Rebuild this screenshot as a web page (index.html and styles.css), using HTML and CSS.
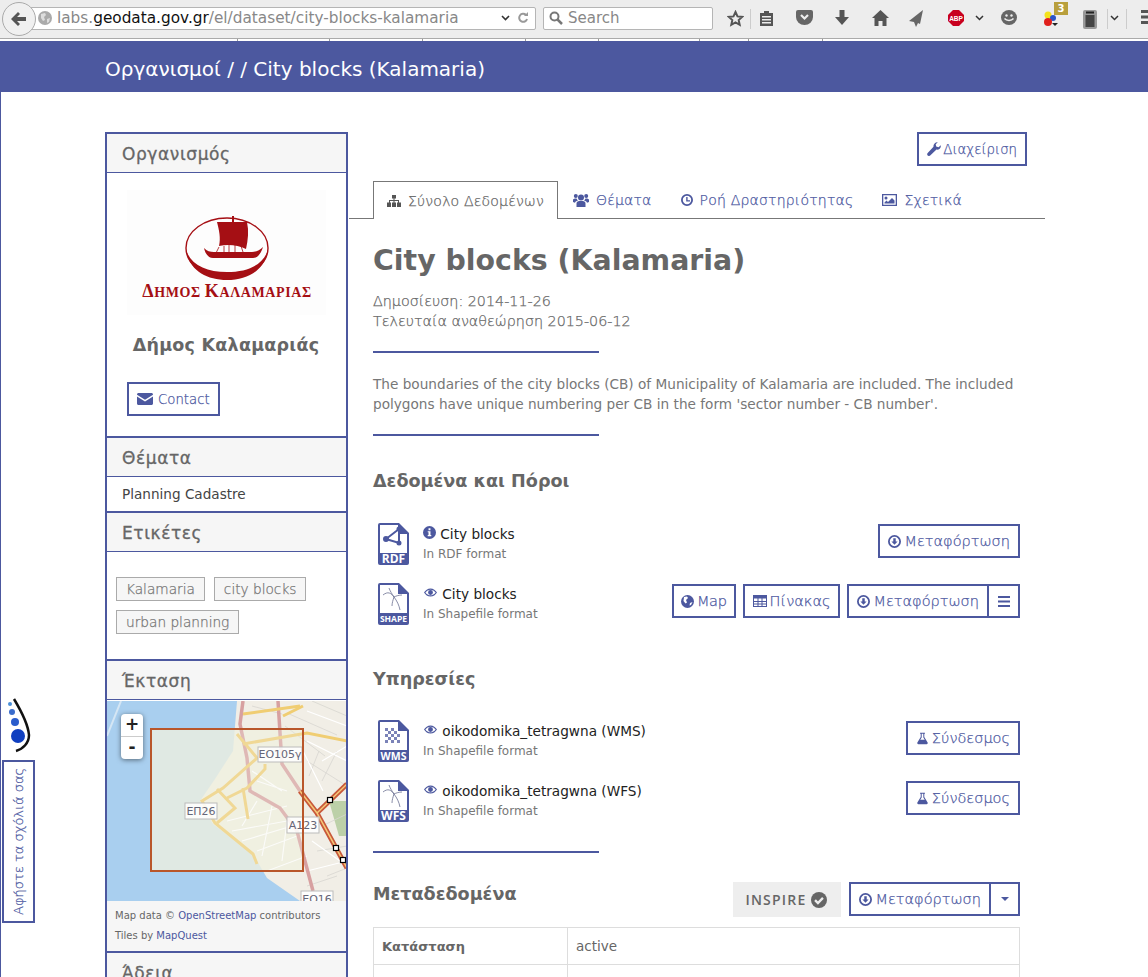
FILE: index.html
```html
<!DOCTYPE html>
<html>
<head>
    <meta charset="utf-8">
    <title>City blocks (Kalamaria)</title>
    <link rel="stylesheet" href="styles.css">
</head>
<body>
    <svg class="defs" width="0" height="0">
        <symbol id="i-down" viewBox="0 0 16 16"><path fill-rule="evenodd" d="M8 0a8 8 0 1 1 0 16A8 8 0 0 1 8 0zm0 2.200a5.800 5.800 0 1 0 0 11.600A5.800 5.800 0 0 0 8 2.200zM6.500 4h3v4h2.300L8 12 4.200 8h2.300z"/></symbol>
        <symbol id="i-eye" viewBox="0 0 16 16"><path fill-rule="evenodd" d="M8 3c3.500 0 6.200 2.200 8 5-1.800 2.800-4.500 5-8 5s-6.200-2.200-8-5c1.800-2.800 4.500-5 8-5zM8 4.500c-2.500 0-4.800 1.500-6.300 3.500C3.200 10 5.500 11.500 8 11.500s4.800-1.500 6.300-3.500C12.800 6 10.500 4.500 8 4.500zM8 5a3 3 0 1 1 0 6 3 3 0 0 1 0-6z"/></symbol>
        <symbol id="i-info" viewBox="0 0 16 16"><path fill-rule="evenodd" d="M8 0a8 8 0 1 1 0 16A8 8 0 0 1 8 0zM6.800 2.800v2.400h2.400V2.800zM5.800 6.400v1.300h1v3.500H5.800v1.300h4.400v-1.300h-1V6.400z"/></symbol>
        <symbol id="i-flask" viewBox="0 0 16 16"><path fill-rule="evenodd" d="M5 1h6v1.300h-.8v4L14.300 13c.5 1-.1 2-1.200 2H2.900c-1.100 0-1.700-1-1.200-2l4.100-6.700v-4H5zM7 2.300v4.400L5.200 9.500h5.600L9 6.700V2.300z"/></symbol>
    </svg>

    <div class="browser">
        <div class="back-btn">
            <svg width="16" height="14" viewBox="0 0 16 14"><path fill="#555" d="M7 0l2 2-3 3h9v4H6l3 3-2 2-7-7z"/></svg>
        </div>
        <div class="url-bar">
            <svg class="globe" width="14" height="14" viewBox="0 0 14 14"><circle cx="7" cy="7" r="7" fill="#aaa"/><path fill="#ddd" d="M3 3l4-1 1 2-2 2 1 3-2 1-2-3zM9 8l3-1-1 4-2 1z"/></svg>
            <span class="url-text">labs.<b>geodata.gov.gr</b>/el/dataset/city-blocks-kalamaria</span>
            <svg width="9" height="6" viewBox="0 0 9 6"><path fill="none" stroke="#333" stroke-width="1.600" d="M1 1l3.500 3.500L8 1"/></svg>
            <svg class="reload" width="12" height="12" viewBox="0 0 12 12"><path fill="none" stroke="#999" stroke-width="2" d="M10 7a4 4 0 1 1-1-4"/><path fill="#999" d="M7 4h4V0z"/></svg>
        </div>
        <div class="search-bar">
            <svg width="14" height="14" viewBox="0 0 14 14"><circle cx="5.500" cy="5.500" r="4" fill="none" stroke="#777" stroke-width="2"/><path stroke="#777" stroke-width="2.500" d="M8.500 8.500l4.500 4.500"/></svg>
            <span>Search</span>
        </div>
        <div class="tool-icons">
            <svg style="left:727px" class="tool" width="17" height="17" viewBox="0 0 17 17"><path fill="none" stroke="#555" stroke-width="2" d="M8.500 2l2 4.400 4.700.5-3.500 3.200 1 4.700-4.200-2.400-4.200 2.400 1-4.700L1.800 6.900l4.700-.5z"/></svg>
            <i class="divider" style="left:750px"></i>
            <svg style="left:759px" class="tool" width="15" height="17" viewBox="0 0 15 17"><path fill="#555" fill-rule="evenodd" d="M1 3h4V1h5v2h4v13H1zM3 6v1.500h9V6zm0 3v1.500h9V9zm0 3v1.500h9V12z"/></svg>
            <svg style="left:796px" class="tool" width="17" height="15" viewBox="0 0 17 15"><path fill="#666" d="M2 0h13a2 2 0 0 1 2 2v5a8.500 8 0 0 1-17 0V2a2 2 0 0 1 2-2z"/><path fill="none" stroke="#eee" stroke-width="2.200" d="M5 5l3.500 3.500L12 5"/></svg>
            <svg style="left:835px" class="tool" width="14" height="16" viewBox="0 0 14 16"><path fill="#555" d="M4.500 0h5v7H14l-7 8-7-8h4.500z"/></svg>
            <svg style="left:872px" class="tool" width="17" height="16" viewBox="0 0 17 16"><path fill="#555" d="M8.500 0L17 8h-2.500v8h-4v-5h-4v5h-4V8H0z"/></svg>
            <svg style="left:909px" class="tool" width="14" height="17" viewBox="0 0 14 17"><path fill="#666" d="M14 0L0 11l5 1 2 5 2-4 2 1z"/></svg>
            <svg style="left:948px" class="tool" width="16" height="16" viewBox="0 0 16 16"><path fill="#c8001e" d="M5 0h6l5 5v6l-5 5H5l-5-5V5z"/><text x="8" y="10.500" class="abp-text">ABP</text></svg>
            <svg style="left:975px" class="tool chevron" width="9" height="6" viewBox="0 0 9 6"><path fill="none" stroke="#333" stroke-width="1.500" d="M1 1l3.500 3.500L8 1"/></svg>
            <svg style="left:1001px" class="tool" width="16" height="16" viewBox="0 0 16 16"><ellipse cx="8" cy="7.500" rx="8" ry="7.500" fill="#666"/><circle cx="5.500" cy="5.500" r="1.200" fill="#eee"/><circle cx="10.500" cy="5.500" r="1.200" fill="#eee"/><path fill="none" stroke="#eee" stroke-width="1.500" d="M3.500 8.500c2 2.500 7 2.500 9 0"/></svg>
            <svg style="left:1043px" class="tool" width="16" height="17" viewBox="0 0 16 17"><circle cx="5" cy="5" r="3.500" fill="#f4e21c"/><circle cx="10" cy="8" r="3" fill="#2a55c8"/><circle cx="5" cy="12" r="4" fill="#e0201c"/><path fill="#222" d="M9 13h6l-3 3z"/></svg>
            <span class="tool badge">3</span>
            <svg style="left:1083px" class="tool" width="14" height="19" viewBox="0 0 14 19"><rect width="14" height="19" rx="2" fill="#999"/><rect x="2.500" y="5" width="9" height="12" fill="#444"/><rect x="3" y="1.500" width="8" height="2" fill="#222"/></svg>
            <i class="divider" style="left:1107px"></i>
            <svg style="left:1110px" class="tool chevron" width="9" height="6" viewBox="0 0 9 6"><path fill="none" stroke="#333" stroke-width="1.500" d="M1 1l3.500 3.500L8 1"/></svg>
            <i class="divider" style="left:1126px"></i>
            <svg style="left:1141px" class="tool" width="7" height="14" viewBox="0 0 7 14"><path fill="#555" d="M0 0h7v3H0zM0 5.500h7v3H0zM0 11h7v3H0z"/></svg>
        </div>
    </div>
    <div class="tick-strip">
        <i style="left:237px"></i><i style="left:329px"></i><i style="left:422px"></i><i style="left:525px"></i>
        <i style="left:598px"></i><i style="left:699px"></i><i style="left:748px"></i><i style="left:822px"></i>
    </div>

    <div class="site-head">Οργανισμοί / / City blocks (Kalamaria)</div>

    <div class="page">
        <aside class="sidebar">
            <section class="side-box">
                <h2 class="side-title">Οργανισμός</h2>
                <div class="org-body">
                    <div class="org-logo">
                        <svg width="200" height="125" viewBox="0 0 200 125">
                            <ellipse cx="100" cy="58" rx="41" ry="30" fill="none" stroke="#a50f14" stroke-width="1.400"/>
                            <path fill="#a50f14" d="M59 60c3 20 20 30 41 30s38-10 41-30c-5 15-20 22-41 22S64 75 59 60z"/>
                            <path fill="#a50f14" d="M90 32h30c2 9 1 18-1 27-8-4-18-5-27-3 2-8 0-16-2-24z"/>
                            <path fill="#a50f14" d="M105 26h2v6h-2z"/>
                            <path fill="#a50f14" d="M77 58c3 3 6 4 10 4h38c4 0 8-2 11-5-2 6-5 11-10 11H86c-5 0-8-5-9-10z"/>
                            <path stroke="#a50f14" stroke-width=".8" d="M92 57l-3 6M97 56v6M102 55v7M108 55v7M114 56l2 6"/>
                            <text x="100" y="107" class="logo-text"><tspan class="logo-cap">Δ</tspan>ΗΜΟΣ <tspan class="logo-cap">Κ</tspan>ΑΛΑΜΑΡΙΑΣ</text>
                        </svg>
                    </div>
                    <h3 class="org-name">Δήμος Καλαμαριάς</h3>
                    <a class="btn btn-contact">
                        <svg class="ico" width="16" height="12" viewBox="0 0 16 12"><path d="M1.500 0h13c.8 0 1.500.7 1.500 1.500v.3L8 6.800 0 1.800v-.3C0 .7.700 0 1.500 0zM0 3.500l8 5 8-5v7c0 .8-.7 1.500-1.500 1.500h-13C.7 12 0 11.300 0 10.500z"/></svg>
                        Contact
                    </a>
                </div>
            </section>
            <section class="side-box">
                <h2 class="side-title">Θέματα</h2>
                <div class="topic-body">Planning Cadastre</div>
            </section>
            <section class="side-box">
                <h2 class="side-title">Ετικέτες</h2>
                <div class="tags-body">
                    <a class="tag">Kalamaria</a>
                    <a class="tag">city blocks</a>
                    <a class="tag">urban planning</a>
                </div>
            </section>
            <section class="side-box">
                <h2 class="side-title">Έκταση</h2>
                <div class="map">
                    <svg width="240" height="200" viewBox="0 0 240 200">
                        <rect width="240" height="200" fill="#a9cfef"/>
                        <path fill="none" stroke="#d5e6f4" stroke-width="2" d="M0 35L14 0"/>
                        <path fill="#f1eee6" d="M130 0L126 50 108 78 93 100 106 123 146 153 160 177 193 200H240V0z"/>
                        <path fill="#bcd0a8" d="M222 100h18v35h-8z"/>
                        <rect x="44" y="28" width="152" height="142" fill="#eef0dc" fill-opacity=".7"/>
                        <g fill="none" stroke="#d8d6d0" stroke-width=".8">
                            <path d="M145 5l30 8M180 12l50 22M178 25l40 30M205 0l35 15M200 60l40 25M215 125l25-12M210 150l30-5M220 175l20-8M200 185l30-10M212 50l-10 25M230 50l-15 30"/>
                        </g>
                        <g fill="none" stroke="#fff" stroke-width="1.200">
                            <path d="M150 80l30 10M120 120l60-15M125 130l55-10M135 140l50-15M150 150l40-15M160 170l40-15M205 140l35 25M200 170l40-10M215 60l25-15M200 40l40 20M145 70l30 20M150 100l-15 25M165 105l-10 50M180 120l-5 40M200 10l40 15M196 50l20 40"/>
                        </g>
                        <g fill="none" stroke="#d7a0a0" stroke-width="3.500">
                            <path d="M136 0l-3 23 7 34 3 33 30 17 17 23 16 60"/>
                            <path d="M171 0l4 63 18 27"/>
                        </g>
                        <g fill="none" stroke="#f0cd72" stroke-width="3">
                            <path d="M130 33l20 24-34 30-21 13 13 22 38 31 4 10"/>
                            <path d="M110 88l18 19-18 15"/>
                            <path d="M120 97l20-10 18-19v-5"/>
                            <path d="M136 87l5 31"/>
                            <path d="M136 43l64-11 40 8"/>
                            <path d="M136 13l57-8"/>
                            <path d="M176 15l20-10"/>
                        </g>
                        <rect x="44" y="28" width="152" height="142" fill="#f2f2e8" fill-opacity=".3"/>
                        <g fill="none" stroke="#c8583a" stroke-width="5">
                            <path d="M193 90l17 22 30 55"/>
                            <path d="M210 112l30-29"/>
                        </g>
                        <g fill="none" stroke="#f5c878" stroke-width="1.500">
                            <path d="M193 90l17 22 30 55"/>
                            <path d="M210 112l30-29"/>
                        </g>
                        <g class="map-labels">
                            <rect x="151" y="46" width="44" height="15"/><text x="173" y="57">ΕΟ105γ</text>
                            <rect x="78" y="102" width="32" height="16"/><text x="94" y="114">ΕΠ26</text>
                            <rect x="180" y="116" width="32" height="16"/><text x="196" y="128">Α123</text>
                            <rect x="194" y="190" width="32" height="16"/><text x="210" y="202">ΕΟ16</text>
                        </g>
                        <g fill="#fff" stroke="#000" stroke-width="1.200">
                            <rect x="220.500" y="96.500" width="5" height="5"/>
                            <rect x="226.500" y="144.500" width="5" height="5"/>
                            <rect x="233.500" y="156.500" width="5" height="5"/>
                        </g>
                        <rect x="44" y="28" width="152" height="142" fill="none" stroke="#b9562a" stroke-width="2"/>
                    </svg>
                    <div class="zoom-ctl">
                        <span class="zoom-btn">+</span>
                        <span class="zoom-btn">-</span>
                    </div>
                </div>
                <div class="map-credit">
                    <p>Map data © <a>OpenStreetMap</a> contributors</p>
                    <p>Tiles by <a>MapQuest</a></p>
                </div>
            </section>
            <section class="side-box">
                <h2 class="side-title">Άδεια</h2>
            </section>
        </aside>

        <main class="main">
            <div class="admin-row">
                <a class="btn btn-admin">
                    <svg class="ico" width="14" height="14" viewBox="0 0 14 14"><path d="M13.800 3.300c.4 2.500-1.800 4.700-4.300 4.300L3.200 13.500c-.7.700-1.900.7-2.500 0-.7-.7-.7-1.800 0-2.500L6.500 4.700C6.100 2.200 8.300-.1 10.800.2L8.700 2.300l.5 2.300 2.300.6z"/></svg>
                    Διαχείριση
                </a>
            </div>
            <nav class="tabs">
                <a class="tab tab-active">
                    <svg class="ico ico-dark" width="14" height="12" viewBox="0 0 14 12"><path d="M5 0h4v3.500H7.500V5H12v2.500h2V12h-4V7.500h1V6H7.500v1.500H9V12H5V7.500h1.500V6H3v1.500h1V12H0V7.500h2V5h4.500V3.500H5z"/></svg>
                    Σύνολο Δεδομένων
                </a>
                <a class="tab">
                    <svg class="ico" width="16" height="14" viewBox="0 0 16 14"><circle cx="8" cy="4.500" r="3"/><circle cx="2.800" cy="3" r="2"/><circle cx="13.200" cy="3" r="2"/><path d="M3.500 14V10.500C3.500 8.500 5 8 8 8s4.500.5 4.500 2.500V14zM0 9V7c0-1 1-1.500 3.500-1.500.4 1 1 1.600 1.500 2C3 8 2 9 2 9.800zM16 9V7c0-1-1-1.500-3.500-1.500-.4 1-1 1.600-1.500 2 2 .5 3 1.500 3 2.300z"/></svg>
                    Θέματα
                </a>
                <a class="tab">
                    <svg class="ico" width="12" height="12" viewBox="0 0 12 12"><path fill-rule="evenodd" d="M6 0a6 6 0 1 1 0 12A6 6 0 0 1 6 0zm0 1.800a4.200 4.200 0 1 0 0 8.400 4.200 4.200 0 0 0 0-8.400zM5.200 3h1.400v3.200H9v1.300H5.200z"/></svg>
                    Ροή Δραστηριότητας
                </a>
                <a class="tab">
                    <svg class="ico" width="15" height="12" viewBox="0 0 15 12"><path fill-rule="evenodd" d="M0 0h15v12H0zm1.300 1.300v9.400h12.400V1.300zM4 2.500a1.500 1.500 0 1 1 0 3 1.500 1.500 0 0 1 0-3zM2.500 9.500v-1l2-2 1.500 1.500 4-4 2.500 2.500v3z"/></svg>
                    Σχετικά
                </a>
            </nav>

            <div class="content">
                <h1 class="ds-title">City blocks (Kalamaria)</h1>
                <p class="dates">Δημοσίευση: 2014-11-26<br>Τελευταία αναθεώρηση 2015-06-12</p>
                <hr class="rule">
                <p class="notes">The boundaries of the city blocks (CB) of Municipality of Kalamaria are included. The included polygons have unique numbering per CB in the form 'sector number - CB number'.</p>
                <hr class="rule">

                <h2 class="sec-title">Δεδομένα και Πόροι</h2>
                <div class="res-list">
                    <div class="res">
                        <svg class="file-ico" width="31" height="42" viewBox="0 0 31 42">
                            <path class="file-shape" d="M2 0h19l10 10v30a2 2 0 0 1-2 2H2a2 2 0 0 1-2-2V2a2 2 0 0 1 2-2z"/>
                            <path fill="#fff" d="M2 2h18v9h9v19H2z"/>
                            <g fill="#4c589f" stroke="#4c589f" stroke-width="2"><path d="M21 6L8 16l13 4zM21 6v14" fill="none"/><circle cx="21" cy="6" r="1.500"/><circle cx="8" cy="16" r="2"/><circle cx="21" cy="20" r="1.500"/></g>
                            <text x="15.500" y="39.500" class="file-label">RDF</text>
                        </svg>
                        <div class="res-text">
                            <div class="res-name"><svg class="ico" width="13" height="13"><use href="#i-info"/></svg> City blocks</div>
                            <div class="res-sub">In RDF format</div>
                        </div>
                        <div class="res-btns">
                            <a class="btn btn-res"><svg class="ico" width="13" height="13"><use href="#i-down"/></svg> Μεταφόρτωση</a>
                        </div>
                    </div>
                    <div class="res">
                        <svg class="file-ico" width="31" height="42" viewBox="0 0 31 42">
                            <path class="file-shape" d="M2 0h19l10 10v30a2 2 0 0 1-2 2H2a2 2 0 0 1-2-2V2a2 2 0 0 1 2-2z"/>
                            <path fill="#fff" d="M2 2h18v9h9v19H2z"/>
                            <path fill="none" stroke="#6a6f90" stroke-width=".8" d="M5 12c5-4 8-2 11 2 3 4 5 8 6 13M11 5c1 3 3 6 5 9 2-1 5-2 8-2M16 14c-1 3-2 6-2 9"/>
                            <text x="15.500" y="39" class="file-label file-label-sm">SHAPE</text>
                        </svg>
                        <div class="res-text">
                            <div class="res-name"><svg class="ico" width="15" height="13"><use href="#i-eye"/></svg> City blocks</div>
                            <div class="res-sub">In Shapefile format</div>
                        </div>
                        <div class="res-btns">
                            <a class="btn btn-res btn-map">
                                <svg class="ico" width="13" height="13" viewBox="0 0 13 13"><circle cx="6.500" cy="6.500" r="6.500"/><path fill="#fff" d="M3 2l3-.5 1 1.500-2 2 1 2.500-1.500 1L2.500 6zM9 8l2.500-1L10 10l-1.500.5z"/></svg>
                                Map</a>
                            <a class="btn btn-res">
                                <svg class="ico" width="14" height="12" viewBox="0 0 14 12"><path fill-rule="evenodd" d="M0 0h14v12H0zm1 3.500V6h3.500V3.500zm4.500 0V6h3V3.500zm4 0V6H13V3.500zM1 7v1.500h3.500V7zm4.500 0v1.500h3V7zm4 0v1.500H13V7zM1 9.500V11h3.500V9.500zm4.500 0V11h3V9.500zm4 0V11H13V9.500z"/></svg>
                                Πίνακας</a>
                            <div class="btn-group">
                                <a class="btn btn-res"><svg class="ico" width="13" height="13"><use href="#i-down"/></svg> Μεταφόρτωση</a>
                                <a class="btn btn-res btn-side">
                                    <svg class="ico" width="12" height="11" viewBox="0 0 12 11"><path d="M0 0h12v2H0zM0 4.500h12v2H0zM0 9h12v2H0z"/></svg>
                                </a>
                            </div>
                        </div>
                    </div>
                </div>

                <h2 class="sec-title sec-services">Υπηρεσίες</h2>
                <div class="res-list">
                    <div class="res">
                        <svg class="file-ico" width="31" height="42" viewBox="0 0 31 42">
                            <path class="file-shape" d="M2 0h19l10 10v30a2 2 0 0 1-2 2H2a2 2 0 0 1-2-2V2a2 2 0 0 1 2-2z"/>
                            <path fill="#fff" d="M2 2h18v9h9v19H2z"/>
                            <path fill="#7b83b8" d="M7 8h3v3H7zM13 8h3v3h-3zM10 11h3v3h-3zM16 11h3v3h-3zM7 14h3v3H7zM13 14h3v3h-3zM19 14h3v3h-3zM10 17h3v3h-3zM16 17h3v3h-3zM7 20h3v3H7zM13 20h3v3h-3zM19 20h3v3h-3z"/>
                            <text x="15.500" y="39.500" class="file-label file-label-md">WMS</text>
                        </svg>
                        <div class="res-text">
                            <div class="res-name"><svg class="ico" width="15" height="13"><use href="#i-eye"/></svg> oikodomika_tetragwna (WMS)</div>
                            <div class="res-sub">In Shapefile format</div>
                        </div>
                        <div class="res-btns">
                            <a class="btn btn-res"><svg class="ico" width="13" height="13"><use href="#i-flask"/></svg> Σύνδεσμος</a>
                        </div>
                    </div>
                    <div class="res">
                        <svg class="file-ico" width="31" height="42" viewBox="0 0 31 42">
                            <path class="file-shape" d="M2 0h19l10 10v30a2 2 0 0 1-2 2H2a2 2 0 0 1-2-2V2a2 2 0 0 1 2-2z"/>
                            <path fill="#fff" d="M2 2h18v9h9v19H2z"/>
                            <path fill="none" stroke="#6a6f90" stroke-width=".8" d="M5 12c5-4 8-2 11 2 3 4 5 8 6 13M11 5c1 3 3 6 5 9 2-1 5-2 8-2M16 14c-1 3-2 6-2 9"/>
                            <text x="15.500" y="39.500" class="file-label">WFS</text>
                        </svg>
                        <div class="res-text">
                            <div class="res-name"><svg class="ico" width="15" height="13"><use href="#i-eye"/></svg> oikodomika_tetragwna (WFS)</div>
                            <div class="res-sub">In Shapefile format</div>
                        </div>
                        <div class="res-btns">
                            <a class="btn btn-res"><svg class="ico" width="13" height="13"><use href="#i-flask"/></svg> Σύνδεσμος</a>
                        </div>
                    </div>
                </div>
                <hr class="rule rule-meta">

                <div class="meta-head">
                    <h2 class="sec-title sec-meta">Μεταδεδομένα</h2>
                    <span class="inspire">INSPIRE
                        <svg width="16" height="16" viewBox="0 0 15 15"><circle cx="7.500" cy="7.500" r="7.500" fill="#666"/><path fill="none" stroke="#eee" stroke-width="2.200" d="M3.800 7.600l2.700 2.700 4.700-4.800"/></svg>
                    </span>
                    <div class="btn-group">
                        <a class="btn btn-res"><svg class="ico" width="13" height="13"><use href="#i-down"/></svg> Μεταφόρτωση</a>
                        <a class="btn btn-res btn-side btn-caret"><span class="caret"></span></a>
                    </div>
                </div>
                <table class="meta-table">
                    <tr><th>Κατάσταση</th><td>active</td></tr>
                    <tr><th>Αδεια</th><td></td></tr>
                </table>
            </div>
        </main>
    </div>

    <div class="feedback">
        <svg width="30" height="60" viewBox="0 0 30 60">
            <circle cx="8" cy="6" r="2" fill="#4a8fd8"/><circle cx="10" cy="14" r="3" fill="#3a6ccc"/><circle cx="13" cy="24" r="4" fill="#2a5ccc"/><circle cx="16" cy="38" r="7" fill="#0f3fc0"/>
            <path fill="none" stroke="#111" stroke-width="2.500" d="M12 1c6 10 14 24 15 36 0 8-6 14-13 16"/>
        </svg>
        <a class="feedback-tab">Αφήστε τα σχόλιά σας</a>
    </div>
</body>
</html>
```

FILE: styles.css
```css
html, body {
    margin: 0;
    padding: 0;
    height: 977px;
    overflow: hidden;
}
body {
    font-family: "DejaVu Sans", sans-serif;
    background-color: #fff;
    color: #666;
    position: relative;
}
.defs {
    position: absolute;
}

/* browser toolbar */
.browser {
    height: 38px;
    background-color: #ededed;
    display: flex;
    align-items: center;
    padding-left: 22px;
    position: relative;
}
.back-btn {
    position: absolute;
    left: 2px;
    top: 2px;
    width: 32px;
    height: 32px;
    border: 1px solid #aaa;
    border-radius: 50%;
    background-color: #f0f0f0;
    display: flex;
    align-items: center;
    justify-content: center;
    z-index: 1;
}
.url-bar {
    width: 514px;
    height: 23px;
    background-color: #fff;
    border: 1px solid #b5b5b5;
    box-sizing: border-box;
    border-radius: 0 2px 2px 0;
    display: flex;
    align-items: center;
    padding-left: 15px;
    gap: 5px;
    margin-top: -2px;
}
.url-bar .globe {
    flex: none;
}
.url-text {
    flex: 1;
    font-size: 15.300px;
    color: #888;
    white-space: nowrap;
    overflow: hidden;
}
.url-text b {
    font-weight: normal;
    color: #111;
}
.reload {
    margin: 0 6px 0 2px;
}
.search-bar {
    width: 170px;
    height: 23px;
    margin: -2px 0 0 7px;
    background-color: #fff;
    border: 1px solid #b5b5b5;
    box-sizing: border-box;
    border-radius: 2px;
    display: flex;
    align-items: center;
    gap: 5px;
    padding-left: 5px;
    font-size: 15px;
    color: #888;
}
.tool {
    position: absolute;
    top: 10px;
}
.chevron {
    top: 15px;
}
.divider {
    position: absolute;
    top: 9px;
    width: 1px;
    height: 20px;
    background-color: #ccc;
}
.abp-text {
    font: bold 6.500px "Liberation Sans", sans-serif;
    fill: #fff;
    text-anchor: middle;
}
.badge {
    left: 1054px;
    top: 2px;
    width: 14px;
    height: 13px;
    background-color: #b89f3c;
    color: #fff;
    font-size: 10px;
    font-weight: bold;
    text-align: center;
    line-height: 13px;
}
.tick-strip {
    height: 3px;
    position: relative;
    border-top: 1px solid #aaa;
    box-sizing: border-box;
    background-color: #fff;
}
.tick-strip i {
    position: absolute;
    top: 0;
    width: 1px;
    height: 2px;
    background-color: #999;
}

/* site header */
.site-head {
    height: 51px;
    line-height: 56px;
    padding-left: 105px;
    background-color: #4c589f;
    color: #fff;
    font-size: 20px;
}

.page {
    display: flex;
    align-items: flex-start;
    padding: 40px 0 0 105px;
    border-left: 1px solid #4c589f;
    height: 900px;
    box-sizing: border-box;
}
.sidebar {
    width: 243px;
    margin-left: -1px;
    flex: none;
}
.side-box {
    border: 2px solid #4c589f;
    border-bottom: none;
}
.side-title {
    margin: 0;
    height: 38px;
    line-height: 41px;
    padding-left: 15px;
    background-color: #f6f6f6;
    border-bottom: 1px solid #4c589f;
    font-size: 17px;
    font-weight: normal;
    letter-spacing: .6px;
    color: #666;
    -webkit-text-stroke: .3px #666;
}
.org-body {
    height: 263px;
    box-sizing: border-box;
    padding: 17px 20px 0;
}
.org-logo {
    height: 125px;
    background-color: #fdfdfd;
}
.logo-text {
    font: bold 14px "Liberation Serif", serif;
    letter-spacing: .6px;
    fill: #a50f14;
    text-anchor: middle;
}
.logo-cap {
    font-size: 18px;
}
.org-name {
    margin: 18px 0 0 -1px;
    font-size: 17.500px;
    line-height: 24px;
    font-weight: bold;
    color: #666;
    text-align: center;
    letter-spacing: .25px;
    white-space: nowrap;
}
.btn {
    display: inline-flex;
    align-items: center;
    gap: 3px;
    box-sizing: border-box;
    height: 34px;
    padding: 0 8px;
    border: 2px solid #4c589f;
    color: #4c589f;
    background-color: #fff;
    font-size: 14.500px;
    font-weight: 200;
    -webkit-text-stroke: .25px #4c589f;
    white-space: nowrap;
}
.ico {
    fill: #4c589f;
    flex: none;
}
.ico-dark {
    fill: #555;
}
.btn-contact {
    margin-top: 25px;
    font-size: 13.300px;
    gap: 5px;
}
.btn-admin {
    font-size: 13.300px;
    gap: 2px;
}
.btn-map {
    padding: 0 7px;
    letter-spacing: -.3px;
}
.topic-body {
    height: 34px;
    line-height: 35px;
    padding-left: 15px;
    font-size: 13.600px;
    color: #444;
}
.tags-body {
    height: 107px;
    box-sizing: border-box;
    padding: 25px 0 0 9px;
    display: flex;
    flex-wrap: wrap;
    gap: 9px;
    align-content: flex-start;
}
.tag {
    height: 24px;
    line-height: 22px;
    box-sizing: border-box;
    padding: 0 9px;
    border: 1px solid #aaa;
    background-color: #f6f6f6;
    color: #777;
    font-size: 13.700px;
    font-weight: 200;
    -webkit-text-stroke: .25px #777;
}
.map {
    position: relative;
    height: 200px;
    margin-top: 1px;
    overflow: hidden;
}
.map svg {
    display: block;
}
.map-labels rect {
    fill: #fff;
    fill-opacity: .85;
    stroke: #bbb;
}
.map-labels text {
    font: 11px "DejaVu Sans", sans-serif;
    fill: #667;
    text-anchor: middle;
}
.zoom-ctl {
    position: absolute;
    left: 14px;
    top: 13px;
    width: 22px;
    height: 45px;
    border-radius: 4px;
    background-color: #fff;
    box-shadow: 0 1px 5px rgba(0, 0, 0, .5);
}
.zoom-btn {
    display: block;
    height: 22px;
    line-height: 21px;
    text-align: center;
    font-size: 17px;
    font-weight: bold;
    color: #222;
    border-bottom: 1px solid #ccc;
}
.zoom-btn:last-child {
    border-bottom: none;
}
.map-credit {
    height: 50px;
    box-sizing: border-box;
    padding: 5px 8px 0;
    background-color: #f6f6f6;
    font-size: 10px;
    color: #666;
}
.map-credit p {
    margin: 0;
    line-height: 20px;
}
.map-credit a {
    color: #4c589f;
}

/* main column */
.main {
    width: 696px;
    margin-left: 1px;
    flex: none;
}
.admin-row {
    display: flex;
    justify-content: flex-end;
    padding-right: 18px;
}
.tabs {
    display: flex;
    margin-top: 15px;
    padding-left: 24px;
    height: 37px;
    border-bottom: 1px solid #777;
}
.tab {
    display: flex;
    align-items: center;
    gap: 7px;
    box-sizing: border-box;
    height: 38px;
    padding: 0 14px;
    font-size: 14px;
    font-weight: 200;
    -webkit-text-stroke: .25px #4c589f;
    letter-spacing: .2px;
    color: #4c589f;
    margin-right: 1px;
}
.tab-active {
    padding: 0 13px;
    border: 1px solid #777;
    border-bottom: none;
    background-color: #fff;
    color: #666;
    -webkit-text-stroke: .25px #666;
}
.content {
    padding: 0 25px 0 24px;
}
.ds-title {
    margin: 22px 0 0;
    font-size: 28.400px;
    line-height: 40px;
    color: #666;
}
.dates {
    margin: 10px 0 0;
    font-size: 14.300px;
    font-weight: 200;
    -webkit-text-stroke: .25px #666;
    line-height: 20px;
}
.rule {
    width: 226px;
    height: 2px;
    border: none;
    background-color: #4c589f;
    margin: 20px 0 0;
}
.notes {
    margin: 21px 0 0;
    font-size: 13.650px;
    line-height: 20px;
    color: #777;
}
.sec-title {
    margin: 33px 0 0;
    font-size: 17.600px;
    line-height: 24px;
    font-weight: bold;
    color: #666;
}
.sec-services {
    margin: 42px 0 -1px;
}
.res-list {
    margin-top: 30px;
    display: flex;
    flex-direction: column;
    gap: 18px;
}
.res {
    height: 42px;
    display: flex;
    padding-left: 5px;
}
.file-ico {
    flex: none;
}
.file-shape {
    fill: #4c589f;
}
.file-label {
    font: bold 12px "Open Sans", sans-serif;
    fill: #fff;
    text-anchor: middle;
}
.file-label-md {
    font-size: 10.500px;
}
.file-label-sm {
    font-size: 8.500px;
}
.res-text {
    margin-left: 14px;
    flex: 1;
}
.res-name {
    padding-top: 1px;
    font-size: 13.650px;
    line-height: 20px;
    color: #222;
}
.res-sub {
    padding-top: 1px;
    font-size: 12px;
    line-height: 19px;
    color: #777;
}
.res-btns {
    display: flex;
    gap: 7px;
    padding-top: 1px;
}
.btn-side {
    margin-left: -2px;
    width: 33px;
    padding: 0;
    justify-content: center;
}
.btn-caret {
    width: 31px;
}
.btn-group {
    display: flex;
}
.rule-meta {
    margin-top: 29px;
}
.meta-head {
    display: flex;
    align-items: flex-start;
    margin-top: 29px;
    height: 45px;
}
.sec-meta {
    margin: 0;
    flex: 1;
}
.inspire {
    display: flex;
    align-items: center;
    gap: 5px;
    box-sizing: border-box;
    width: 108px;
    height: 35px;
    padding-left: 12px;
    margin-right: 8px;
    background-color: #eee;
    font-family: "Open Sans", sans-serif;
    font-size: 14px;
    font-weight: 600;
    letter-spacing: 1.200px;
    color: #666;
}
.caret {
    border-top: 4px solid #4c589f;
    border-left: 4px solid transparent;
    border-right: 4px solid transparent;
}
.meta-table {
    width: 647px;
    border-collapse: collapse;
    font-size: 13.500px;
}
.meta-table th, .meta-table td {
    border: 1px solid #ddd;
    height: 36px;
    padding: 0 8px;
    text-align: left;
}
.meta-table th {
    width: 177px;
    font-size: 13px;
    color: #666;
}

/* feedback widget */
.feedback {
    position: absolute;
    left: 2px;
    top: 698px;
    width: 33px;
}
.feedback svg {
    display: block;
}
.feedback-tab {
    display: block;
    box-sizing: border-box;
    width: 33px;
    height: 163px;
    margin-top: 2px;
    border: 2px solid #4c589f;
    background-color: #fff;
    color: #4c589f;
    font-size: 13px;
    font-weight: 200;
    -webkit-text-stroke: .25px #4c589f;
    line-height: 29px;
    text-align: center;
    writing-mode: vertical-rl;
    transform: rotate(180deg);
}
```
